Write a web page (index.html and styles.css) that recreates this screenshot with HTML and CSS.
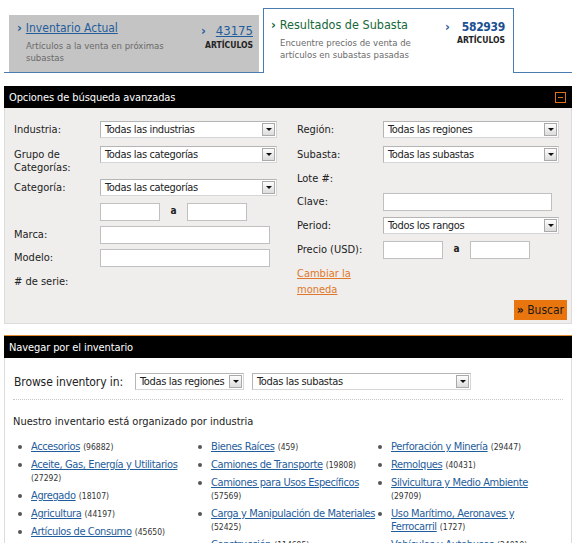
FILE: index.html
```html
<!DOCTYPE html>
<html lang="es">
<head>
  <meta charset="UTF-8">
  <title>Inventario</title>
  <link rel="stylesheet" href="styles.css">
</head>
<body>

  <div class="tabs">
    <div class="tab">
      <div class="tab-main">
        <a class="tab-title" href="#"><span class="chev">›</span><u>Inventario Actual</u></a>
        <p class="tab-desc">Artículos a la venta en próximas subastas</p>
      </div>
      <div class="tab-count">
        <span class="chev">›</span><a href="#" class="num">43175</a>
        <div class="unit">ARTÍCULOS</div>
      </div>
    </div>
    <div class="tab active">
      <div class="tab-main">
        <span class="tab-title"><span class="chev">›</span>Resultados de Subasta</span>
        <p class="tab-desc">Encuentre precios de venta de artículos en subastas pasadas</p>
      </div>
      <div class="tab-count">
        <span class="chev">›</span><span class="num">582939</span>
        <div class="unit">ARTÍCULOS</div>
      </div>
    </div>
  </div>

  <section class="panel search">
    <div class="panel-head">
      <span>Opciones de búsqueda avanzadas</span>
      <span class="collapse"></span>
    </div>
    <div class="panel-body">
      <div class="cols">
        <div class="col">
          <div class="row h25"><label>Industria:</label><div class="select w176"><span>Todas las industrias</span><i class="arrow"></i></div></div>
          <div class="row h33"><label>Grupo de Categorías:</label><div class="select w176"><span>Todas las categorías</span><i class="arrow"></i></div></div>
          <div class="row h24"><label>Categoría:</label><div class="select w176"><span>Todas las categorías</span><i class="arrow"></i></div></div>
          <div class="row h23"><label></label><input class="box w60"><span class="to">a</span><input class="box w60"></div>
          <div class="row h23"><label>Marca:</label><input class="box w169"></div>
          <div class="row h24"><label>Modelo:</label><input class="box w169"></div>
          <div class="row h24"><label># de serie:</label></div>
        </div>
        <div class="col">
          <div class="row h25"><label>Región:</label><div class="select w175"><span>Todas las regiones</span><i class="arrow"></i></div></div>
          <div class="row h24"><label>Subasta:</label><div class="select w175"><span>Todas las subastas</span><i class="arrow"></i></div></div>
          <div class="row h23"><label>Lote #:</label></div>
          <div class="row h24"><label>Clave:</label><input class="box w168"></div>
          <div class="row h24"><label>Period:</label><div class="select w175"><span>Todos los rangos</span><i class="arrow"></i></div></div>
          <div class="row h23"><label>Precio (USD):</label><input class="box w60"><span class="to">a</span><input class="box w60"></div>
          <div class="row"><label><a href="#" class="currency">Cambiar la moneda</a></label></div>
        </div>
      </div>
      <div class="actions">
        <button class="go"><b>»</b> Buscar</button>
      </div>
    </div>
  </section>

  <section class="panel browse">
    <div class="panel-head">
      <span>Navegar por el inventario</span>
    </div>
    <div class="panel-body">
      <div class="browse-bar">
        <span class="browse-label">Browse inventory in:</span>
        <div class="select w109"><span>Todas las regiones</span><i class="arrow"></i></div>
        <div class="select w219"><span>Todas las subastas</span><i class="arrow"></i></div>
      </div>
      <h4>Nuestro inventario está organizado por industria</h4>
      <div class="industries">
        <ul>
          <li><a href="#">Accesorios</a> <small>(96882)</small></li>
          <li><a href="#">Aceite, Gas, Energía y Utilitarios</a> <small>(27292)</small></li>
          <li><a href="#">Agregado</a> <small>(18107)</small></li>
          <li><a href="#">Agricultura</a> <small>(44197)</small></li>
          <li><a href="#">Artículos de Consumo</a> <small>(45650)</small></li>
        </ul>
        <ul>
          <li><a href="#">Bienes Raíces</a> <small>(459)</small></li>
          <li><a href="#">Camiones de Transporte</a> <small>(19808)</small></li>
          <li><a href="#">Camiones para Usos Específicos</a> <small>(57569)</small></li>
          <li><a href="#">Carga y Manipulación de Materiales</a> <small>(52425)</small></li>
          <li><a href="#">Construcción</a> <small>(114695)</small></li>
        </ul>
        <ul>
          <li><a href="#">Perforación y Minería</a> <small>(29447)</small></li>
          <li><a href="#">Remolques</a> <small>(40431)</small></li>
          <li><a href="#">Silvicultura y Medio Ambiente</a> <small>(29709)</small></li>
          <li><a href="#">Uso Marítimo, Aeronaves y Ferrocarril</a> <small>(1727)</small></li>
          <li><a href="#">Vehículos y Autobuses</a> <small>(24019)</small></li>
        </ul>
      </div>
    </div>
  </section>

</body>
</html>
```

FILE: styles.css
```css
body {
  margin: 0;
  padding: 0 3px 0 4px;
  font-family: "DejaVu Sans Condensed", "DejaVu Sans", sans-serif;
  font-size: 11px;
  color: #222;
  background: #fff;
}
a {
  color: #1f5d9c;
}

/* tabs */
.tabs {
  display: flex;
  align-items: flex-end;
  height: 72px;
  border-bottom: 1px solid #4a7cb0;
  padding-left: 5px;
}
.tab {
  display: flex;
  box-sizing: border-box;
  width: 250px;
  height: 57px;
  background: #c4c4c4;
  padding: 5px 6px 0 8px;
}
.tab.active {
  width: 251px;
  height: 65px;
  margin-left: 4px;
  margin-bottom: -1px;
  background: #fff;
  border: 1px solid #4a7cb0;
  border-bottom: none;
  padding: 8px 8px 0 7px;
}
.tab-main {
  flex: 1;
}
.tab-title {
  font-size: 12px;
  text-decoration: none;
  color: #1f5d9c;
}
.tab.active .tab-title {
  font-size: 12.5px;
  color: #16683a;
}
.chev {
  font-weight: bold;
  color: #1f5d9c;
  margin-right: 4px;
  font-size: 13px;
}
.tab.active .tab-title .chev {
  color: #16683a;
}
.tab-desc {
  margin: 5px 0 0 9px;
  color: #6a6a6a;
  font-size: 9.5px;
  line-height: 12px;
  width: 150px;
}
.tab.active .tab-desc {
  width: 140px;
  margin-top: 5px;
}
.tab-count {
  text-align: right;
  padding-top: 3px;
}
.tab.active .tab-count {
  padding-top: 2px;
}
.tab-count .chev {
  margin-right: 10px;
}
.tab.active .tab-count .chev {
  margin-right: 12px;
}
.tab-count .num {
  font-size: 13px;
  color: #1f5d9c;
}
.tab.active .tab-count .num {
  font-size: 12px;
  color: #1a4f92;
  font-weight: bold;
  letter-spacing: -0.3px;
}
.unit {
  font-size: 8.5px;
  font-weight: bold;
  color: #222;
  margin-top: 2px;
}
.tab.active .unit {
  margin-top: 1px;
}

/* panels */
.panel {
  margin-top: 13px;
}
.browse {
  margin-top: 11px;
}
.panel-head {
  display: flex;
  align-items: center;
  justify-content: space-between;
  height: 22px;
  padding: 0 5px;
  background: #000;
  color: #fff;
  font-size: 11px;
  letter-spacing: -0.1px;
}
.collapse {
  width: 9px;
  height: 9px;
  border: 1px solid #e0701a;
  position: relative;
  margin-right: 1px;
}
.collapse::after {
  content: "";
  position: absolute;
  left: 2px;
  right: 2px;
  top: 4px;
  height: 1px;
  background: #e0701a;
}
.panel-body {
  border: 1px solid #dcdcdc;
  border-top: none;
}
.search .panel-body {
  background: #efeeec;
  padding: 13px 4px 3px 9px;
}
.cols {
  display: grid;
  grid-template-columns: 283px 1fr;
}
.row {
  display: flex;
  align-items: flex-start;
}
.h23 { height: 23px; }
.h24 { height: 24px; }
.h25 { height: 25px; }
.h33 { height: 33px; }
.row label {
  width: 86px;
  flex: none;
  padding-top: 2px;
  line-height: 13px;
  color: #222;
}
.currency {
  color: #e0772a;
  line-height: 16px;
}

/* form controls */
.select {
  display: flex;
  box-sizing: border-box;
  height: 17px;
  background: #fff;
  border: 1px solid #b5b5b5;
  border-right-color: #d6d6d6;
  border-bottom-color: #d6d6d6;
  font-size: 11px;
  letter-spacing: -0.35px;
}
.select span {
  flex: 1;
  padding-left: 4px;
  line-height: 15px;
  white-space: nowrap;
  overflow: hidden;
}
.arrow {
  width: 13px;
  height: 13px;
  margin: 1px;
  box-sizing: border-box;
  border: 1px solid #aaa;
  background: linear-gradient(#fdfdfd, #dcdcdc);
  position: relative;
}
.arrow::after {
  content: "";
  position: absolute;
  left: 3px;
  top: 4px;
  border-left: 3px solid transparent;
  border-right: 3px solid transparent;
  border-top: 3px solid #111;
}
.w176 { width: 177px; }
.w175 { width: 176px; }
.w109 { width: 109px; }
.w219 { width: 219px; }
.box {
  box-sizing: border-box;
  height: 18px;
  margin: 0;
  border: 1px solid #c0c0c0;
  background: #fff;
}
.w60 { width: 60px; }
.w168 { width: 169px; }
.w169 { width: 170px; }
.to {
  width: 27px;
  text-align: center;
  font-size: 10px;
  font-weight: bold;
  line-height: 16px;
}
.actions {
  display: flex;
  justify-content: flex-end;
  margin-top: 2px;
}
.go {
  height: 20px;
  padding: 0 3px 0 3px;
  border: none;
  background: #e8750e;
  font-family: inherit;
  font-size: 12px;
  color: #1a1a1a;
}
.go b {
  font-size: 12px;
}

/* browse */
.browse .panel-head {
  height: 22px;
  border-top: 1px solid #e0892f;
}
.browse .panel-body {
  background: #fff;
  padding: 15px 8px 0 8px;
}
.browse-bar {
  display: flex;
  align-items: center;
  gap: 8px;
  padding: 0 0 9px 1px;
  border-bottom: 1px dotted #c8c8c8;
}
.browse-label {
  font-size: 12px;
  letter-spacing: -0.1px;
  margin-right: 4px;
}
.browse h4 {
  margin: 15px 0 12px 0;
  font-size: 11px;
  font-weight: normal;
}
.industries {
  display: grid;
  grid-template-columns: 180px 180px 180px;
}
.industries ul {
  list-style: none;
  margin: 0;
  padding: 0 0 0 18px;
}
.industries li {
  position: relative;
  font-size: 11px;
  line-height: 13px;
  margin-bottom: 5px;
  margin-right: -6px;
}
.industries li::before {
  content: "";
  position: absolute;
  left: -13px;
  top: 5px;
  width: 4px;
  height: 4px;
  border-radius: 50%;
  background: #555;
}
.industries a {
  letter-spacing: -0.38px;
}
.industries small {
  font-size: 8.5px;
  line-height: 1;
  color: #333;
}
```
